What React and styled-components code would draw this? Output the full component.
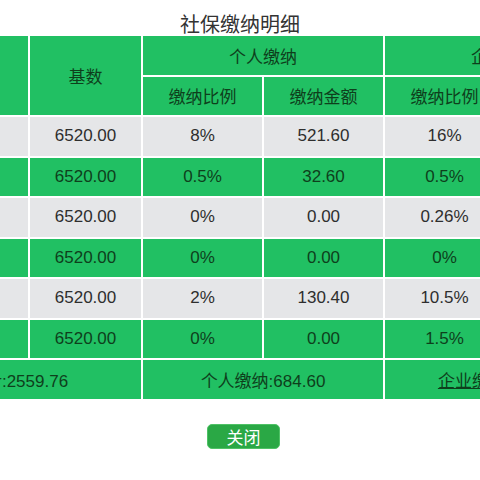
import styled, { createGlobalStyle } from "styled-components";

const GlobalStyle = createGlobalStyle`
  body {
    margin: 0;
    background: #fff;
    font-family: "Liberation Sans", "Noto Sans CJK SC", sans-serif;
  }
`;

const rows = [
  ["养老保险", "6520.00", "8%", "521.60", "16%", "1043.20"],
  ["失业保险", "6520.00", "0.5%", "32.60", "0.5%", "32.60"],
  ["工伤保险", "6520.00", "0%", "0.00", "0.26%", "16.95"],
  ["生育保险", "6520.00", "0%", "0.00", "0%", "0.00"],
  ["医疗保险", "6520.00", "2%", "130.40", "10.5%", "684.60"],
  ["大病医疗", "6520.00", "0%", "0.00", "1.5%", "97.81"],
];

const Page = styled.div`
  width: 480px;
  height: 480px;
  overflow: hidden;
  display: flex;
  flex-direction: column;
`;

const Title = styled.div`
  padding-top: 14px;
  height: 22px;
  line-height: 22px;
  text-align: center;
  font-size: 20px;
  color: #333;
`;

const Grid = styled.div`
  display: grid;
  grid-template-columns: 133px 111px 119px 119px 119px 119px;
  grid-auto-rows: 38.5px;
  gap: 2px;
  margin-left: -105px;
  width: max-content;
  background: #fff;
`;

const Cell = styled.div`
  display: flex;
  align-items: center;
  justify-content: center;
  white-space: nowrap;
  font-size: 17px;
  background: ${(p) => (p.$gray ? "#e5e6e8" : "#21c063")};
  color: ${(p) => (p.$gray ? "#2e2e2e" : "#0e3f1c")};
  grid-column: ${(p) => (p.$span ? `span ${p.$span}` : "auto")};
  grid-row: ${(p) => (p.$rows ? `span ${p.$rows}` : "auto")};
`;

const Link = styled.span`
  text-decoration: underline;
`;

const Footer = styled.div`
  display: flex;
  justify-content: center;
  padding-top: 25px;
  padding-left: 7px;
`;

const CloseButton = styled.button`
  width: 73px;
  height: 25px;
  border: 1px solid #4fc266;
  border-radius: 5px;
  background: #2aa845;
  color: #fff;
  font-family: "Noto Sans CJK SC", sans-serif;
  font-size: 17px;
  line-height: 23px;
  padding: 0;
`;

export default function App() {
  return (
    <Page>
      <GlobalStyle />
      <Title>社保缴纳明细</Title>
      <Grid>
        <Cell $rows={2}>险种</Cell>
        <Cell $rows={2}>基数</Cell>
        <Cell $span={2}>个人缴纳</Cell>
        <Cell $span={2}>企业缴纳</Cell>
        <Cell>缴纳比例</Cell>
        <Cell>缴纳金额</Cell>
        <Cell>缴纳比例</Cell>
        <Cell>缴纳金额</Cell>
        {rows.map((r, i) =>
          r.map((v, j) => (
            <Cell key={`${i}-${j}`} $gray={i % 2 === 0}>
              {v}
            </Cell>
          ))
        )}
        <Cell $span={2}>合计:2559.76</Cell>
        <Cell $span={2}>个人缴纳:684.60</Cell>
        <Cell $span={2}>
          <Link>企业缴纳:1875.16</Link>
        </Cell>
      </Grid>
      <Footer>
        <CloseButton>关闭</CloseButton>
      </Footer>
    </Page>
  );
}
